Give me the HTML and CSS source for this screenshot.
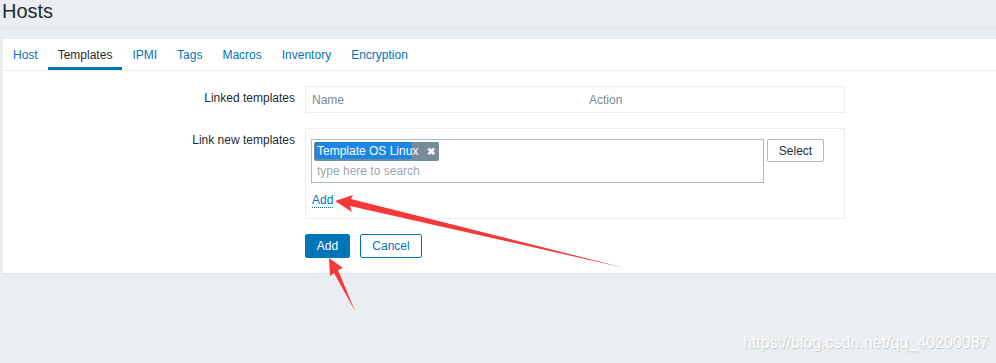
FILE: index.html
```html
<!DOCTYPE html>
<html lang="en">
<head>
  <meta charset="UTF-8" />
  <title>Hosts</title>
  <link rel="stylesheet" href="styles.css">
</head>
<body>
  <div class="page-header">
    <h1>Hosts</h1>
  </div>

  <div class="panel">
    <ul class="tabs">
      <li><a href="#">Host</a></li>
      <li class="active"><a href="#">Templates</a></li>
      <li><a href="#">IPMI</a></li>
      <li><a href="#">Tags</a></li>
      <li><a href="#">Macros</a></li>
      <li><a href="#">Inventory</a></li>
      <li><a href="#">Encryption</a></li>
    </ul>

    <form class="form-list">
      <div class="form-row">
        <label class="form-label">Linked templates</label>
        <div class="form-field">
          <div class="table-box">
            <span class="col-name">Name</span>
            <span class="col-action">Action</span>
          </div>
        </div>
      </div>

      <div class="form-row">
        <label class="form-label">Link new templates</label>
        <div class="form-field">
          <div class="link-box">
            <div class="ms-line">
              <div class="multiselect">
                <span class="chip"><span class="sel">Template OS Linu</span>x <b class="chip-x">&#x2716;</b></span>
                <div class="ms-search">type here to search</div>
              </div>
              <button type="button" class="btn-alt">Select</button>
            </div>
            <a href="#" class="link-action">Add</a>
          </div>
        </div>
      </div>

      <div class="form-row buttons">
        <div class="form-label"></div>
        <div class="form-field">
          <button type="submit" class="btn-main">Add</button>
          <button type="button" class="btn-cancel">Cancel</button>
        </div>
      </div>
    </form>
  </div>

  <div class="watermark">https://blog.csdn.net/qq_40200087</div>

  <svg class="arrows" width="996" height="363" viewBox="0 0 996 363">
    <polygon fill="#f5393a" points="335,201 353,195 351,199 625,268 350,206 352,212" />
    <polygon fill="#f5393a" points="329,258 343,268 338,270 355,311 334,273 330,276" />
  </svg>
</body>
</html>
```

FILE: styles.css
```css
* {
  box-sizing: border-box;
}

body {
  margin: 0;
  padding: 0;
  font-family: 'Liberation Sans', Arial, sans-serif;
  font-size: 12px;
  color: #1f2c33;
  background: #ebeef0;
  width: 996px;
  height: 363px;
  position: relative;
  overflow: hidden;
}

.page-header {
  height: 29px;
  border-bottom: 1px solid #dfe4e7;
  padding-left: 2px;
}

h1 {
  margin: 0;
  font-size: 20px;
  font-weight: normal;
  line-height: 22px;
  color: #1f2c33;
}

.panel {
  margin: 10px 0 0 3px;
  background: #ffffff;
  border-bottom: 1px solid #dfe4e7;
  height: 235px;
}

.tabs {
  list-style: none;
  margin: 0;
  padding: 0;
  display: flex;
  height: 32px;
  border-bottom: 1px solid #ebeef0;
}

.tabs li {
  padding: 0 10px;
  height: 31px;
  border-bottom: 3px solid transparent;
}

.tabs li a {
  display: block;
  padding-top: 3px;
  line-height: 26px;
  color: #0275b8;
  text-decoration: none;
}

.tabs li.active {
  border-bottom-color: #0275b8;
}

.tabs li.active a {
  color: #1f2c33;
}

.form-list {
  padding-top: 15px;
}

.form-row {
  display: flex;
  margin-bottom: 15px;
}

.form-label {
  width: 302px;
  text-align: right;
  padding-right: 10px;
  padding-top: 5px;
  flex-shrink: 0;
}

.form-field {
  display: flex;
  gap: 10px;
}

.table-box {
  width: 540px;
  height: 27px;
  border: 1px solid #ebeef0;
  display: flex;
  align-items: center;
  color: #768d99;
}

.col-name {
  width: 283px;
  padding-left: 6px;
}

.link-box {
  width: 540px;
  height: 91px;
  border: 1px solid #ebeef0;
  padding: 10px 5px 0 5px;
}

.ms-line {
  display: flex;
  gap: 3px;
  align-items: flex-start;
}

.multiselect {
  width: 453px;
  height: 44px;
  border: 1px solid #acbbc2;
  padding: 2px 2px 0 2px;
}

.chip {
  display: inline-block;
  background: #768d99;
  color: #ffffff;
  font-size: 12px;
  line-height: 18px;
  padding: 0 4px 0 1px;
  border-radius: 2px;
}

.chip .sel {
  background: #1c86e6;
  padding: 2px 0 1px 2px;
}

.chip-x {
  font-size: 10px;
  margin-left: 5px;
}

.ms-search {
  color: #9aa9b1;
  padding: 3px 0 0 3px;
}

.btn-alt {
  height: 23px;
  width: 57px;
  border: 1px solid #acbbc2;
  border-radius: 2px;
  background: #ffffff;
  color: #1f2c33;
  font-family: inherit;
  font-size: 12px;
}

.link-action {
  display: inline-block;
  margin: 11px 0 0 1px;
  color: #0275b8;
  text-decoration: none;
  border-bottom: 1px dotted #0275b8;
  line-height: 13px;
}

.btn-main,
.btn-cancel {
  height: 24px;
  border-radius: 2px;
  font-family: inherit;
  font-size: 12px;
  border: 1px solid #0275b8;
}

.btn-main {
  width: 45px;
  background: #0275b8;
  color: #ffffff;
}

.btn-cancel {
  width: 62px;
  background: #ffffff;
  color: #0275b8;
}

.watermark {
  position: absolute;
  left: 743px;
  top: 334px;
  font-size: 16px;
  color: #fbfcfc;
  text-shadow: 1px 1px 1px #c2c9ce;
}

.arrows {
  position: absolute;
  left: 0;
  top: 0;
  pointer-events: none;
}
```
